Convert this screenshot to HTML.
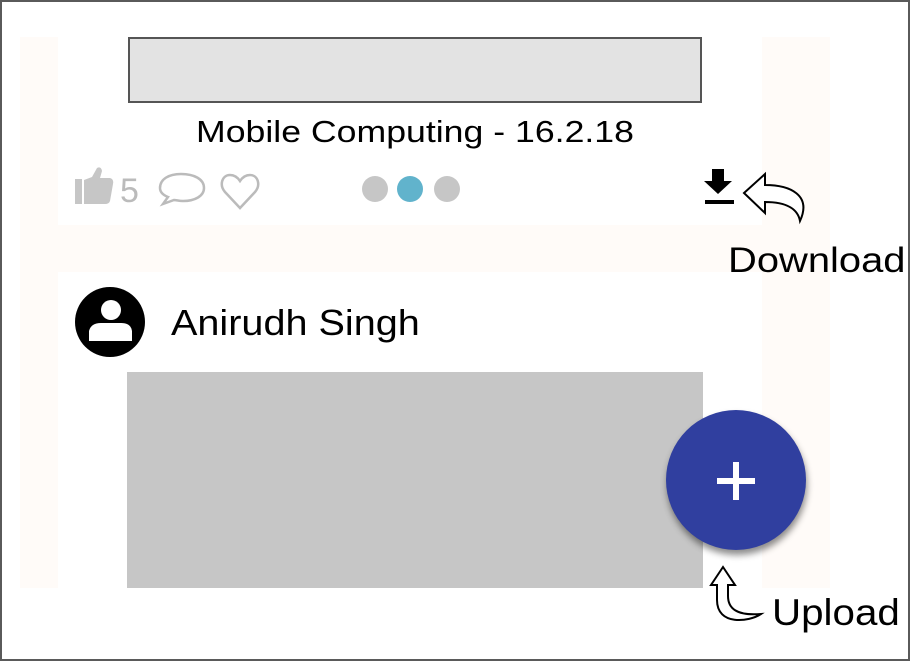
<!DOCTYPE html>
<html><head><style>
html,body{margin:0;padding:0}
body{width:910px;height:661px;position:relative;overflow:hidden;background:#fff;font-family:"Liberation Sans",sans-serif}
.frame{position:absolute;left:0;top:0;width:906px;height:657px;border:2px solid #5a5a5a}
.abs{position:absolute}
.sx{display:inline-block;transform-origin:left center;white-space:nowrap}
</style></head><body>
<div class="abs" style="left:20px;top:37px;width:810px;height:551px;background:#fffbf8"></div>
<div class="abs" style="left:58px;top:37px;width:704px;height:188px;background:#fff"></div>
<div class="abs" style="left:58px;top:272px;width:704px;height:316px;background:#fff"></div>
<div class="abs" style="left:128px;top:37px;width:570px;height:62px;background:#e3e3e3;border:2px solid #555"></div>
<div class="abs" style="left:196px;top:114px;font-size:31px;color:#000"><span class="sx" style="transform:scaleX(1.15)">Mobile Computing - 16.2.18</span></div>
<svg class="abs" style="left:70px;top:165px" width="200" height="45">
<rect x="5" y="14" width="7" height="25" fill="#c6c6c6"/>
<path d="M14 15 L22 12 L27 3 Q31 1 32 6 L30 13 L40 13 Q44 14 43 19 L40 36 Q39 39 35 39 L14 39 Z" fill="#c6c6c6"/>
<text x="50" y="37" font-size="34" fill="#bbb" font-family="Liberation Sans">5</text>
<path d="M111 9 C124 9 134 14 134 23 C134 31 125 36 113 36 C109 36 106 35 104 35 L93 39 L98 32 C93 30 90 27 90 23 C90 14 99 9 111 9 Z" fill="none" stroke="#bbb" stroke-width="2.5"/>
<path d="M170 43 L155 27 C149 20 152 10 160 10 C165 10 168 13 170 16 C172 13 175 10 180 10 C188 10 191 20 185 27 Z" fill="none" stroke="#bbb" stroke-width="2.5"/>
</svg>
<div class="abs" style="left:362px;top:176px;width:26px;height:26px;border-radius:50%;background:#c6c6c6"></div>
<div class="abs" style="left:397px;top:176px;width:26px;height:26px;border-radius:50%;background:#61b3cc"></div>
<div class="abs" style="left:434px;top:176px;width:26px;height:26px;border-radius:50%;background:#c6c6c6"></div>
<svg class="abs" style="left:700px;top:165px" width="115" height="90">
<path d="M12 4 H24 V16 H32 L18 29 L4 16 H12 Z" fill="#000"/>
<rect x="5" y="35" width="29" height="4" fill="#000"/>
<path d="M44 28 L65 9 L65 20 C90 20 112 30 100 56 C98 45 88 37 65 37 L65 48 Z" fill="#fff" stroke="#000" stroke-width="2"/>
</svg>
<div class="abs" style="left:728px;top:241px;font-size:35px;color:#000"><span class="sx" style="transform:scaleX(1.14)">Download</span></div>
<svg class="abs" style="left:75px;top:287px" width="72" height="72">
<circle cx="35" cy="35" r="35" fill="#000"/>
<circle cx="36" cy="23" r="10" fill="#fff"/>
<path d="M14 54 L14 44 Q16 36 26 36 L46 36 Q56 36 57 44 L57 54 Z" fill="#fff"/>
</svg>
<div class="abs" style="left:171px;top:302px;font-size:36px;color:#000"><span class="sx" style="transform:scaleX(1.1)">Anirudh Singh</span></div>
<div class="abs" style="left:127px;top:372px;width:576px;height:216px;background:#c6c6c6"></div>
<div class="abs" style="left:666px;top:410px;width:140px;height:140px;border-radius:50%;background:#303f9f;box-shadow:1px 5px 7px rgba(0,0,0,.45)"></div>
<div class="abs" style="left:717px;top:478px;width:38px;height:6px;background:#fff"></div>
<div class="abs" style="left:733px;top:462px;width:6px;height:38px;background:#fff"></div>
<svg class="abs" style="left:705px;top:562px" width="60" height="62">
<path d="M6 23 L18 5 L30 23 L23 23 L23 34 C23 46 31 54 56 52 C44 60 12 64 12 38 L12 23 Z" fill="#fff" stroke="#000" stroke-width="2"/>
</svg>
<div class="abs" style="left:772px;top:592px;font-size:37px;color:#000"><span class="sx" style="transform:scaleX(1.09)">Upload</span></div>
<div class="frame"></div>
</body></html>
